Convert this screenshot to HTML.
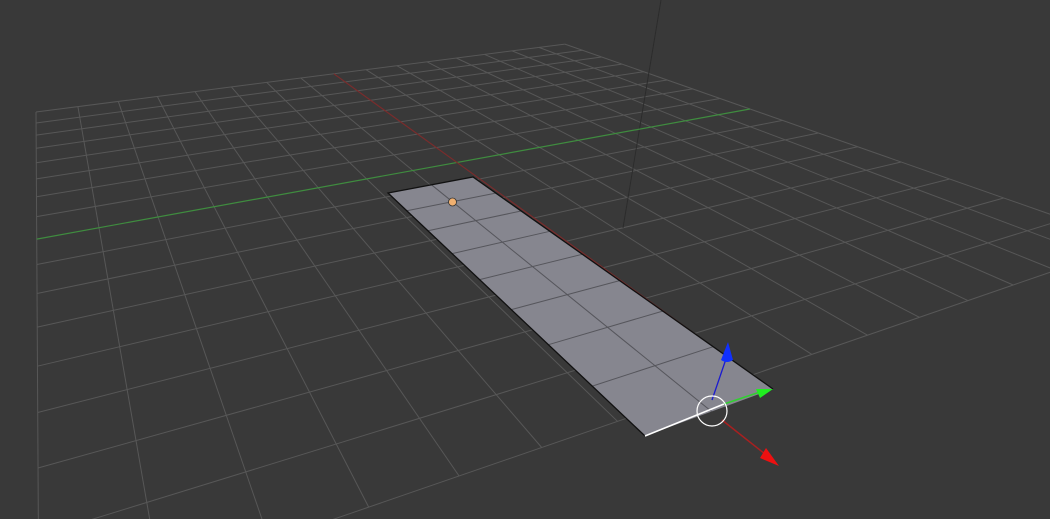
<!DOCTYPE html>
<html><head><meta charset="utf-8"><style>
html,body{margin:0;padding:0;background:#393939;width:1050px;height:519px;overflow:hidden}
svg{display:block}
</style></head><body>
<svg id="s" width="1050" height="519" viewBox="0 0 1050 519" xmlns="http://www.w3.org/2000/svg">
<rect width="1050" height="519" fill="#393939"/>
<g id="grid" stroke="#575757" stroke-width="1" fill="none"></g>
<line x1="661" y1="0" x2="623" y2="228" stroke="#2c2c2c" stroke-width="1"/>
<g id="axes" fill="none"></g>
<polygon points="388,193 473,177 773,389 645,436" fill="#86868f"/>
<g id="plane" stroke="#56565c" stroke-width="1" fill="none"></g>
<polyline points="645,436 388,193 473,177 773,389" fill="none" stroke="#111" stroke-width="1.3"/>
<line x1="645" y1="436" x2="724" y2="404" stroke="#fff" stroke-width="1.5"/>
<circle cx="452.5" cy="202" r="4" fill="#f0b070" stroke="#333" stroke-width="0.8"/>
<line x1="712" y1="400" x2="727" y2="356" stroke="#1a1ad0" stroke-width="1.3"/>
<path d="M728,342 L733,360 Q727,364 721,360 Z" fill="#1030ff"/>
<line x1="724" y1="404" x2="760" y2="392" stroke="#30d030" stroke-width="1.5"/>
<path d="M773,389 L760,398 L756,389 Z" fill="#20ee20"/>
<line x1="722" y1="420" x2="765" y2="454" stroke="#a82020" stroke-width="1.5"/>
<path d="M779,466 L760,458 L766,448 Z" fill="#ee1010"/>
<circle cx="712" cy="411" r="15" fill="none" stroke="#fff" stroke-width="1.2"/>
</svg>
<script>
function solve(A,b){var n=b.length;for(var i=0;i<n;i++){var p=i;for(var r=i+1;r<n;r++)if(Math.abs(A[r][i])>Math.abs(A[p][i]))p=r;
var t=A[i];A[i]=A[p];A[p]=t;t=b[i];b[i]=b[p];b[p]=t;for(var r=0;r<n;r++){if(r==i)continue;var f=A[r][i]/A[i][i];
for(var c=i;c<n;c++)A[r][c]-=f*A[i][c];b[r]-=f*b[i];}}return b.map(function(v,i){return v/A[i][i];});}
function H(src,dst){var A=[],b=[];for(var i=0;i<4;i++){var x=src[i][0],y=src[i][1],u=dst[i][0],v=dst[i][1];
A.push([x,y,1,0,0,0,-u*x,-u*y]);b.push(u);A.push([0,0,0,x,y,1,-v*x,-v*y]);b.push(v);}
var h=solve(A,b);return function(x,y){var w=h[6]*x+h[7]*y+1;return [(h[0]*x+h[1]*y+h[2])/w,(h[3]*x+h[4]*y+h[5])/w];};}
var NS="http://www.w3.org/2000/svg";
function ln(g,a,b,attrs){var e=document.createElementNS(NS,"line");e.setAttribute("x1",a[0].toFixed(1));e.setAttribute("y1",a[1].toFixed(1));
e.setAttribute("x2",b[0].toFixed(1));e.setAttribute("y2",b[1].toFixed(1));if(attrs)for(var k in attrs)e.setAttribute(k,attrs[k]);g.appendChild(e);}
var P=H([[-8,-8],[6,-8],[0,8],[8,0]],[[36,112],[38,468],[750,109],[752,375]]);
var g=document.getElementById("grid");
for(var i=-8;i<=8;i++){if(i!=0){ln(g,P(i,-8),P(i,8));ln(g,P(-8,i),P(8,i));}}
var ax=document.getElementById("axes");
ln(ax,P(0,-8),P(0,8),{stroke:"#3f8c3f","stroke-width":"1.2"});
ln(ax,P(-8,0),P(8,0),{stroke:"#7a2c2c","stroke-width":"1.2"});
var Q=H([[0,0],[2,0],[2,8],[0,8]],[[388,193],[473,177],[773,389],[645,436]]);
var pg=document.getElementById("plane");
ln(pg,Q(1,0),Q(1,8));
for(var j=1;j<8;j++)ln(pg,Q(0,j),Q(2,j));
</script>
</body></html>
